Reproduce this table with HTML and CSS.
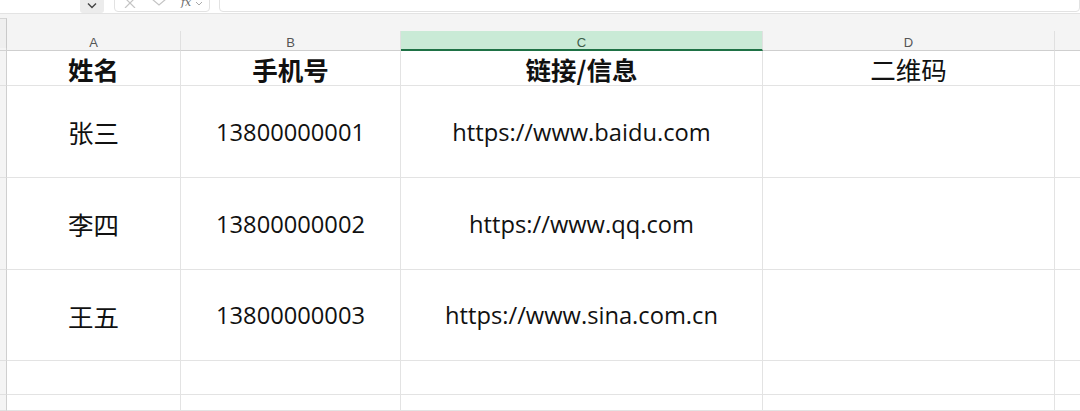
FILE: index.html
```html
<!DOCTYPE html>
<html lang="zh-CN">
<head>
<meta charset="utf-8">
<title>Sheet</title>
<link rel="stylesheet" href="styles.css">
</head>
<body>
<div class="toolbar">
  <div class="namebox-gap"></div>
  <div class="namebox-btn">
    <svg width="12" height="8" viewBox="0 0 12 8"><path d="M2 1.5 L6 5.5 L10 1.5" fill="none" stroke="#444" stroke-width="1.4"/></svg>
  </div>
  <div class="fx-group">
    <svg class="ic" width="14" height="10" viewBox="0 0 14 10"><path d="M2 0 L12 10 M12 0 L2 10" stroke="#c4c4c4" stroke-width="1.2" fill="none"/></svg>
    <svg class="ic" width="16" height="10" viewBox="0 0 16 10"><path d="M1 1 L8 7 L15 1" stroke="#c4c4c4" stroke-width="1.2" fill="none"/></svg>
    <span class="fx">fx</span>
    <svg class="ic small" width="8" height="6" viewBox="0 0 8 6"><path d="M1 1 L4 4 L7 1" stroke="#aaa" stroke-width="1" fill="none"/></svg>
  </div>
  <div class="formula-input"></div>
</div>
<div class="band">
  <div class="corner"></div>
</div>
<div class="sheet">
  <div class="rh rh-head"></div>
  <div class="ch">A</div>
  <div class="ch">B</div>
  <div class="ch ch-sel">C</div>
  <div class="ch">D</div>
  <div class="ch ch-last"></div>

  <div class="rh"></div>
  <div class="cell cjk bold">姓名</div>
  <div class="cell cjk bold">手机号</div>
  <div class="cell cjk bold">链接/信息</div>
  <div class="cell cjk">二维码</div>
  <div class="cell last"></div>

  <div class="rh"></div>
  <div class="cell cjk">张三</div>
  <div class="cell num">13800000001</div>
  <div class="cell num">https://www.baidu.com</div>
  <div class="cell"></div>
  <div class="cell last"></div>

  <div class="rh"></div>
  <div class="cell cjk">李四</div>
  <div class="cell num">13800000002</div>
  <div class="cell num">https://www.qq.com</div>
  <div class="cell"></div>
  <div class="cell last"></div>

  <div class="rh"></div>
  <div class="cell cjk">王五</div>
  <div class="cell num">13800000003</div>
  <div class="cell num">https://www.sina.com.cn</div>
  <div class="cell"></div>
  <div class="cell last"></div>

  <div class="rh"></div>
  <div class="cell"></div>
  <div class="cell"></div>
  <div class="cell"></div>
  <div class="cell"></div>
  <div class="cell last"></div>

  <div class="rh"></div>
  <div class="cell"></div>
  <div class="cell"></div>
  <div class="cell"></div>
  <div class="cell"></div>
  <div class="cell last"></div>
</div>
</body>
</html>
```

FILE: styles.css
```css
* { box-sizing: border-box; }
html, body {
  margin: 0;
  padding: 0;
  width: 1080px;
  height: 411px;
  overflow: hidden;
  background: #ffffff;
  font-family: "Open Sans", "Noto Sans CJK SC", sans-serif;
}

.toolbar {
  height: 14px;
  display: flex;
  align-items: flex-end;
  overflow: hidden;
  background: #ffffff;
  border-bottom: 1px solid #e3e3e3;
}
.namebox-gap { width: 80px; flex: none; }
.namebox-btn {
  width: 24px;
  height: 26px;
  flex: none;
  background: #ececec;
  border-radius: 0 0 3px 3px;
  display: flex;
  align-items: flex-end;
  justify-content: center;
  padding-bottom: 3px;
}
.fx-group {
  margin-left: 10px;
  width: 96px;
  height: 26px;
  flex: none;
  border: 1px solid #e2e2e2;
  border-radius: 4px;
  margin-bottom: 1px;
  display: flex;
  align-items: flex-end;
  padding: 0 0 3px 8px;
}
.fx-group .ic { flex: none; margin-right: 14px; }
.fx-group .fx {
  font-family: "DejaVu Serif", serif;
  font-style: italic;
  font-size: 11px;
  line-height: 11px;
  color: #666;
  margin-right: 4px;
  margin-bottom: 0;
}
.fx-group .ic.small { margin-right: 0; margin-bottom: 1px; }
.formula-input {
  margin-left: 9px;
  flex: 1;
  height: 26px;
  border: 1px solid #e2e2e2;
  border-radius: 4px;
  margin-bottom: 1px;
}

.band {
  height: 17px;
  background: #f4f4f4;
  position: relative;
}
.corner {
  position: absolute;
  left: 0;
  top: 4px;
  width: 7px;
  height: 30px;
  border-right: 1px solid #c9c9c9;
  border-top: 1px solid #d5d5d5;
  background: #efefef;
  z-index: 2;
}

.sheet {
  display: grid;
  grid-template-columns: 7px 174px 220px 362px 292px 25px;
  grid-template-rows: 20px 35px 92px 92px 91px 34px 16px;
}

.rh {
  background: #f4f4f4;
  border-right: 1px solid #cfcfcf;
  border-bottom: 1px solid #e0e0e0;
}
.rh-head { border-bottom: 1px solid #d2d2d2; }

.ch {
  background: #f4f4f4;
  border-right: 1px solid #e0e0e0;
  border-bottom: 1px solid #cfcfcf;
  font-family: "Liberation Sans", sans-serif;
  font-size: 13px;
  color: #555;
  display: flex;
  align-items: center;
  justify-content: center;
  padding-top: 3px;
}
.ch-sel {
  background: #c9ead6;
  border-bottom: 2px solid #1e7145;
  color: #3d5c49;
  padding-top: 4px;
}
.ch-last { border-right: none; }

.cell {
  border-right: 1px solid #e3e3e3;
  border-bottom: 1px solid #e3e3e3;
  display: flex;
  align-items: center;
  justify-content: center;
  color: #111;
  white-space: nowrap;
}
.cell.last { border-right: none; }
.cjk {
  font-family: "Noto Sans CJK SC", sans-serif;
  font-size: 25.5px;
}
.bold { font-weight: 700; }
.num {
  font-family: "Open Sans", sans-serif;
  font-size: 23.7px;
}
```
